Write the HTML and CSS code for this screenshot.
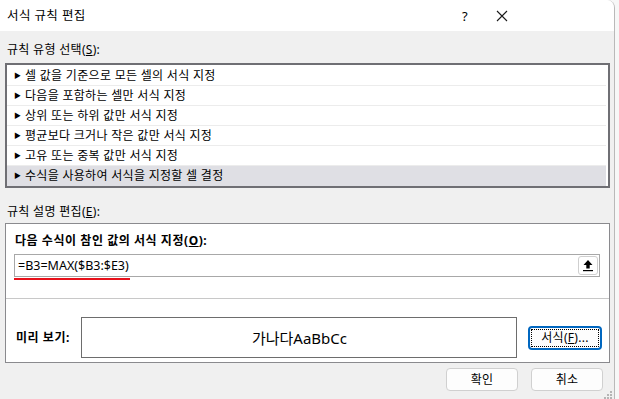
FILE: index.html
```html
<!DOCTYPE html>
<html lang="ko">
<head>
<meta charset="utf-8">
<title>서식 규칙 편집</title>
<link rel="stylesheet" href="styles.css">
</head>
<body>
<div class="dialog">
  <div class="titlebar">
    <span class="title">서식 규칙 편집</span>
    <span class="help">?</span>
    <span class="close"><svg width="12" height="12" viewBox="0 0 12 12"><path d="M1 1L11 11M11 1L1 11" stroke="#1a1a1a" stroke-width="1.1" fill="none"/></svg></span>
  </div>
  <div class="content">
    <div class="label first">규칙 유형 선택(<u>S</u>):</div>
    <div class="listbox">
      <div class="row"><span class="tri">▶</span>셀 값을 기준으로 모든 셀의 서식 지정</div>
      <div class="row"><span class="tri">▶</span>다음을 포함하는 셀만 서식 지정</div>
      <div class="row"><span class="tri">▶</span>상위 또는 하위 값만 서식 지정</div>
      <div class="row"><span class="tri">▶</span>평균보다 크거나 작은 값만 서식 지정</div>
      <div class="row"><span class="tri">▶</span>고유 또는 중복 값만 서식 지정</div>
      <div class="row selected"><span class="tri">▶</span>수식을 사용하여 서식을 지정할 셀 결정</div>
    </div>
    <div class="label second">규칙 설명 편집(<u>E</u>):</div>
    <div class="group">
      <div class="formula-section">
        <div class="bold-label">다음 수식이 참인 값의 서식 지정(<u>O</u>):</div>
        <div class="formula-box">
          <span class="formula">=B3=MAX($B3:$E3)</span>
          <span class="collapse-btn"><svg width="12" height="13" viewBox="0 0 12 13"><path d="M6 1L1.5 6H4.3V9.5H7.7V6H10.5Z" fill="#000"/><rect x="1" y="11" width="10" height="1.2" fill="#000"/></svg></span>
        </div>
        <div class="red-line"></div>
      </div>
      <div class="preview-section">
        <div class="bold-label preview-label">미리 보기:</div>
        <div class="preview-box">가나다AaBbCc</div>
        <div class="btn format-btn"><span class="focus-ring">서식(<u>F</u>)...</span></div>
      </div>
    </div>
    <div class="buttons">
      <div class="btn">확인</div>
      <div class="btn">취소</div>
    </div>
  </div>
  <svg class="grip" width="8" height="8" viewBox="0 0 8 8"><g fill="#b5b5b5"><rect x="6" y="0" width="2" height="2"/><rect x="3" y="3" width="2" height="2"/><rect x="6" y="3" width="2" height="2"/><rect x="0" y="6" width="2" height="2"/><rect x="3" y="6" width="2" height="2"/><rect x="6" y="6" width="2" height="2"/></g></svg>
</div>
</body>
</html>
```
FILE: styles.css
```css
html, body {
  margin: 0;
  padding: 0;
  background: #f7f7f7;
  width: 619px;
  height: 399px;
  overflow: hidden;
}
body {
  font-family: "Noto Sans", "Noto Sans CJK KR", sans-serif;
  font-size: 12px;
  color: #000;
}
u { text-decoration: underline; text-underline-offset: 1px; }
.dialog {
  position: relative;
  width: 615px;
  height: 399px;
  background: #f0f0f0;
  border-right: 1px solid #b9b9b9;
  border-top-right-radius: 8px;
  overflow: hidden;
  box-sizing: border-box;
}
.titlebar {
  height: 31px;
  background: #fff;
  display: flex;
  align-items: center;
}
.title {
  padding-left: 7px;
  font-size: 12.5px;
  line-height: 16px;
  letter-spacing: 0.4px;
  flex: 1;
}
.help {
  width: 12px;
  font-size: 13px;
  line-height: 16px;
  margin-right: 22px;
}
.close {
  display: flex;
  margin-right: 106px;
}
.close svg { display: block; }
.content {
  padding: 0 4px 0 5px;
}
.label {
  line-height: 18px;
  padding-left: 2px;
  letter-spacing: 0.3px;
}
.label.first { padding-top: 10px; margin-bottom: 4px; }
.label.second { margin-top: 15px; margin-bottom: 2px; }
.listbox {
  border: 2px solid #6f6f74;
  background: #fff;
  height: 120px;
  padding-top: 1px;
  box-sizing: content-box;
  padding-right: 2px;
}
.row {
  height: 19px;
  line-height: 19px;
  border-bottom: 1px solid #ececec;
  padding-left: 7px;
  display: flex;
  align-items: center;
  white-space: nowrap;
  letter-spacing: 0.3px;
}
.row.selected {
  background: #dfdfe4;
  border-bottom: none;
  height: 20px;
  line-height: 20px;
}
.tri {
  font-size: 7px;
  width: 11px;
  display: inline-block;
  letter-spacing: 0;
}
.group {
  border: 1px solid #8a8a8e;
  background: #fff;
  height: 138px;
}
.formula-section {
  padding: 8px 9px 0 8px;
  height: 66px;
  border-bottom: 1px solid #c8c8c8;
}
.bold-label {
  font-weight: bold;
  line-height: 17px;
  padding-left: 1px;
  letter-spacing: 0.55px;
}
.formula-box {
  margin-top: 5px;
  height: 23px;
  border: 1px solid #a8a8a8;
  box-sizing: border-box;
  display: flex;
  align-items: center;
  justify-content: space-between;
  padding: 0 1px 0 3px;
}
.formula {
  font-size: 12.5px;
  line-height: 16px;
}
.collapse-btn {
  width: 20px;
  height: 19px;
  border: 1px solid #cfcfcf;
  border-radius: 3px;
  box-sizing: border-box;
  display: flex;
  align-items: center;
  justify-content: center;
}
.red-line {
  width: 116px;
  height: 2px;
  background: #e8101a;
  margin-top: 1px;
}
.preview-section {
  display: flex;
  align-items: center;
  padding: 18px 0 0 9px;
}
.preview-label {
  width: 65px;
}
.preview-box {
  width: 436px;
  height: 41px;
  border: 1px solid #6d6d6d;
  box-sizing: border-box;
  display: flex;
  align-items: center;
  justify-content: center;
  font-size: 15px;
  padding-left: 1px;
}
.btn {
  width: 72px;
  height: 23px;
  border: 1px solid #d0d0d0;
  border-radius: 4px;
  background: #fdfdfd;
  box-sizing: border-box;
  display: flex;
  align-items: center;
  justify-content: center;
  line-height: 16px;
  letter-spacing: 0.3px;
}
.format-btn {
  margin-left: 11px;
  width: 74px;
  height: 24px;
  border: 2px solid #0067c0;
  border-radius: 4px;
  padding: 1px;
}
.focus-ring {
  width: 100%;
  height: 100%;
  border: 1px dotted #000;
  box-sizing: border-box;
  display: flex;
  align-items: center;
  justify-content: center;
  font-size: 12px;
}
.buttons {
  display: flex;
  justify-content: flex-end;
  gap: 13px;
  margin-top: 5px;
  padding-right: 7px;
}
.grip {
  position: absolute;
  right: 2px;
  bottom: 0;
}
```
